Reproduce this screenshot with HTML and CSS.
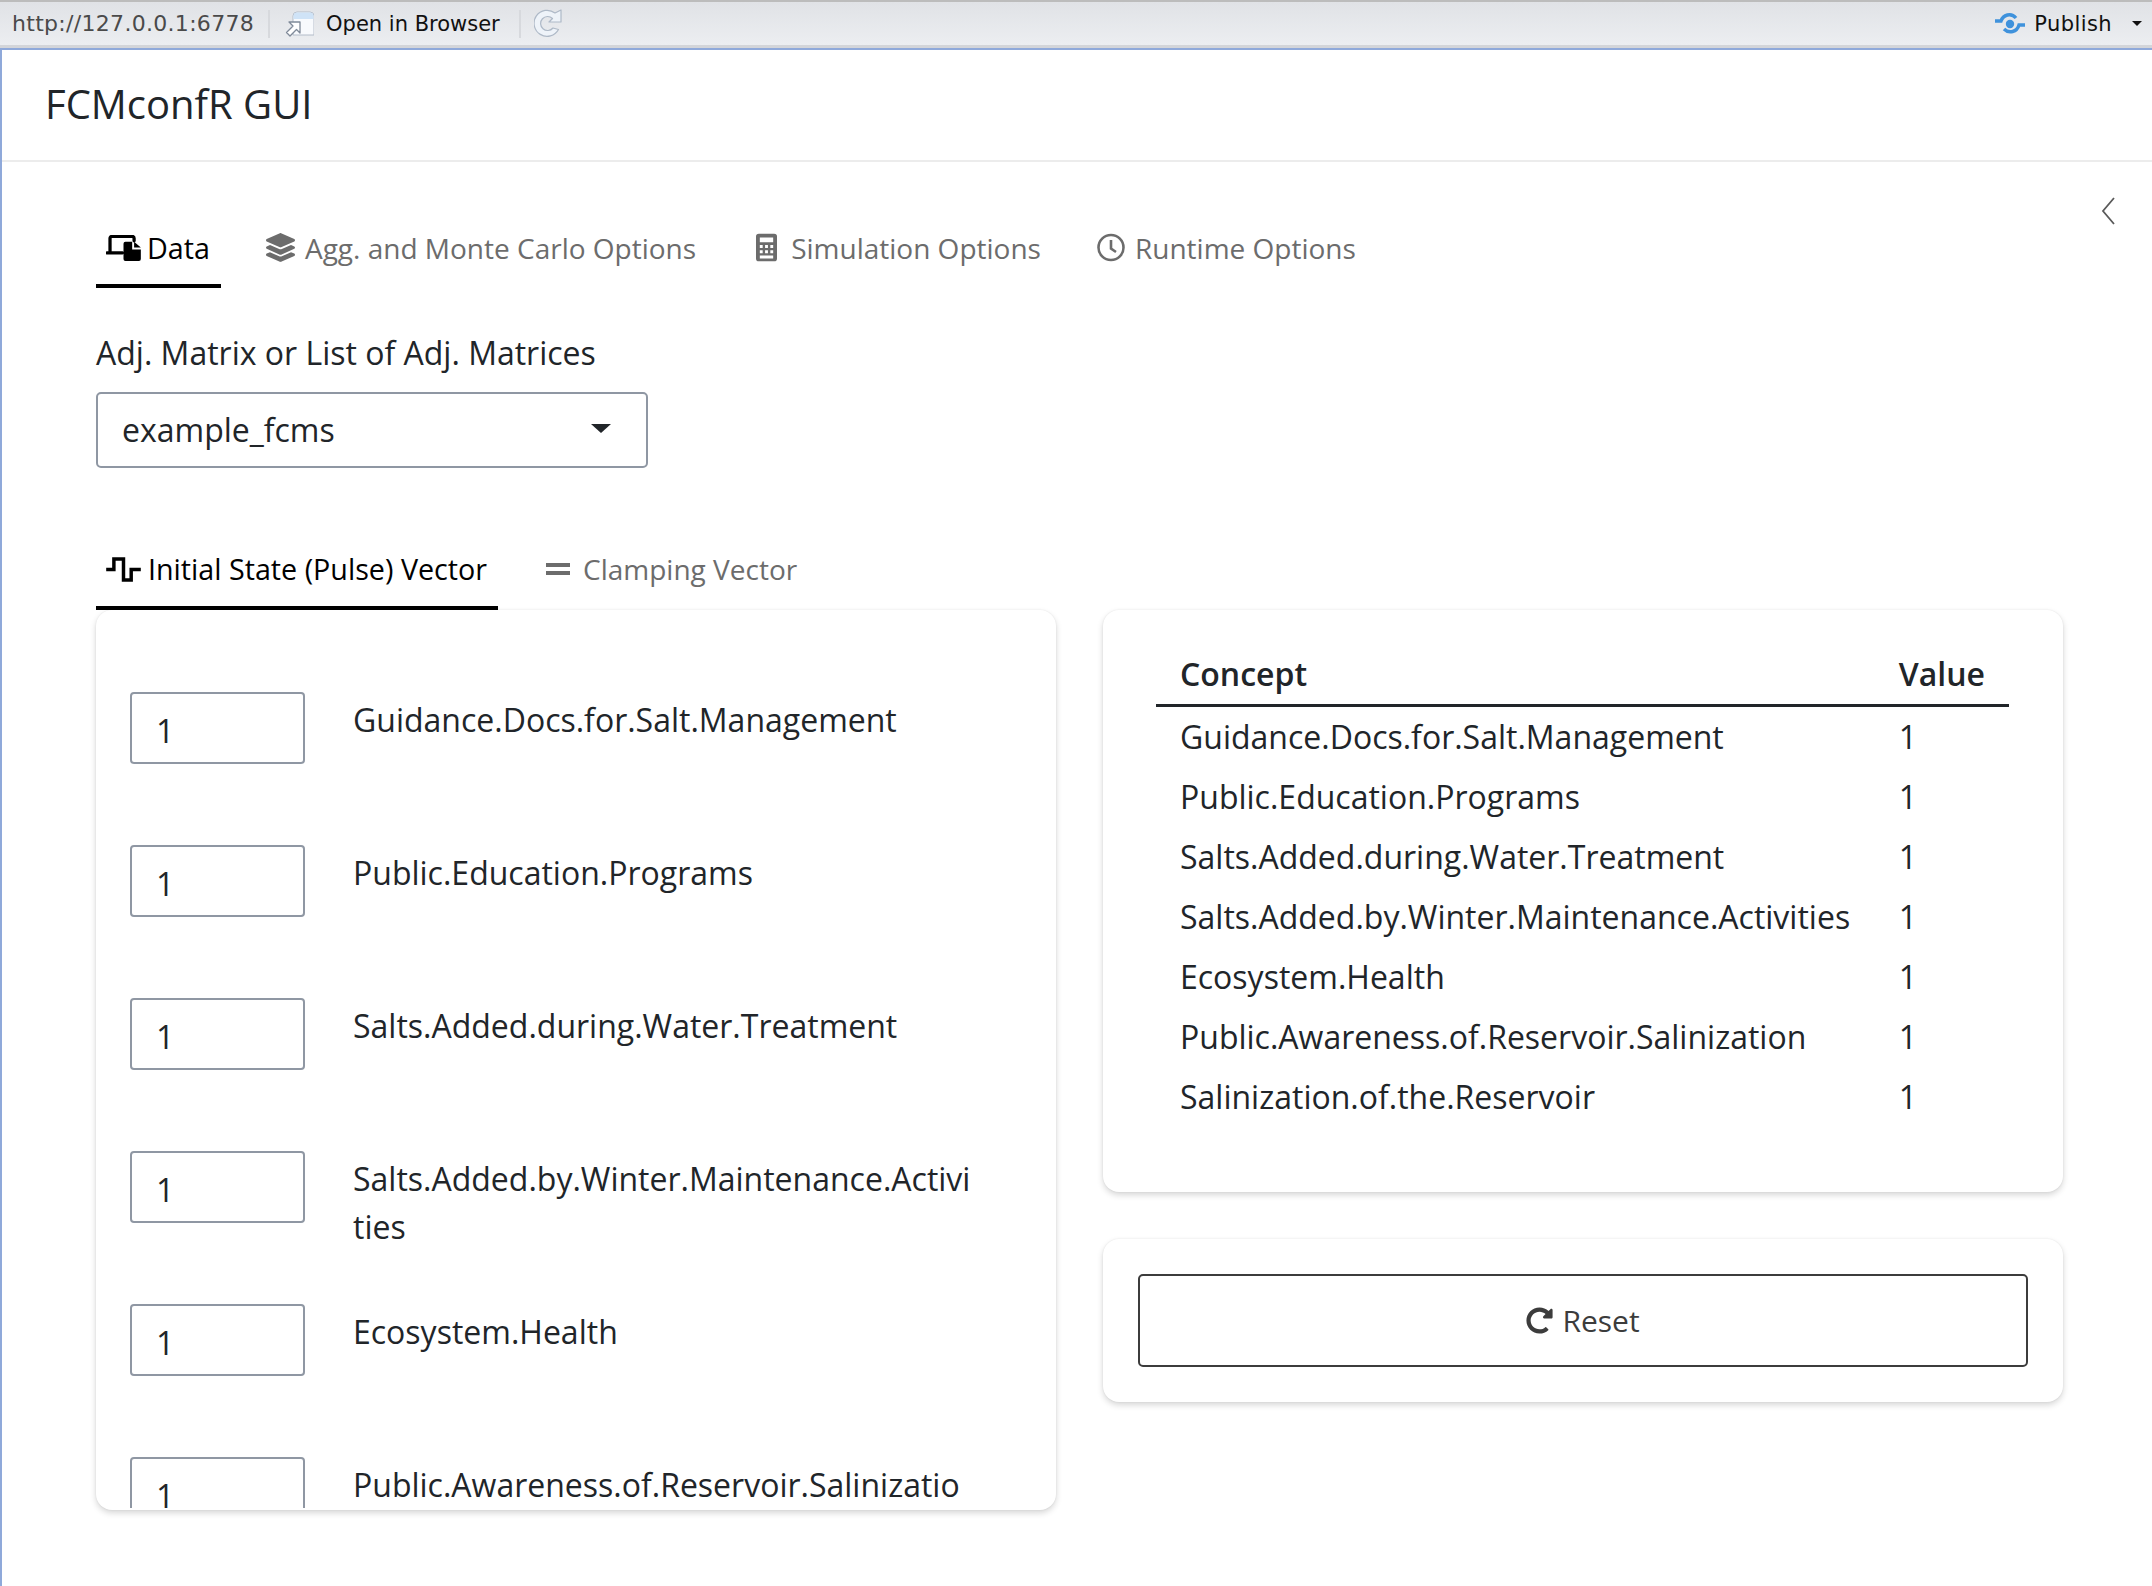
FILE: index.html
```html
<!DOCTYPE html>
<html lang="en">
<head>
    <meta charset="UTF-8">
    <title>FCMconfR GUI</title>
    <link rel="stylesheet" href="styles.css">
</head>
<body>
    <!-- viewer toolbar -->
    <div class="toolbar">
      <span class="toolbarUrl">http://127.0.0.1:6778</span>
      <span class="toolbarSep"></span>
      <svg class="toolbarOpenIcon" viewBox="0 0 30 26">
        <path d="M9 24V5a4 4 0 0 1 4-4h13a4 4 0 0 1 4 4v19z" fill="#f8fafd" stroke="#b4bdc9"/>
        <path d="M9.500 7V5a3.500 3.500 0 0 1 3.500-3.500h13A3.500 3.500 0 0 1 29.500 5v3H9.500z" fill="#cfe3f7"/>
        <path d="M6 6h11v11l-3.500-3.500L7 20l-3.500-3.500L10 10z" fill="#fff" stroke="#7f8a99" stroke-width="1.300" stroke-linejoin="round" transform="translate(-1 5)"/>
      </svg>
      <span class="toolbarLabel">Open in Browser</span>
      <span class="toolbarSep toolbarSepWide"></span>
      <svg class="toolbarReload" viewBox="0 0 28 30">
        <path d="M24.500 20.500A13 13 0 1 1 21 4l6-3v12H15l3.500-3.500a7 7 0 1 0 .5 9.500z" fill="#eef3f9" stroke="#aeb9c7" stroke-width="1.200" stroke-linejoin="round"/>
      </svg>
      <span class="toolbarSpacer"></span>
      <svg class="publishIcon" viewBox="0 0 32 24">
        <circle cx="16" cy="12" r="4.200" fill="#3f92dc"/>
        <path d="M1 9h6c2-6 10-9 15-3M31 13h-6c-2 7-10 9-15 4" fill="none" stroke="#3f92dc" stroke-width="3.400"/>
      </svg>
      <span class="toolbarLabel publishLabel">Publish</span>
      <span class="publishCaret"></span>
    </div>

    <div class="appFrame">
      <header class="appHeader">FCMconfR GUI</header>

      <main class="appBody">
        <svg class="sidebarToggle" viewBox="0 0 14 28">
          <path d="M13 1L2 14l11 13" fill="none" stroke="#5a5a5a" stroke-width="1.800"/>
        </svg>

        <nav class="tabs mainTabs">
          <a class="tab active">
            <svg class="tabIcon iconData" viewBox="0 0 36 27">
              <path d="M4 18V3.500a2 2 0 0 1 2-2h21a2 2 0 0 1 2 2V6M1 18.500h16" fill="none" stroke="currentColor" stroke-width="3.400" stroke-linecap="round"/>
              <path d="M20 7h7v8h9v10a2 2 0 0 1-2 2H20a2 2 0 0 1-2-2V9a2 2 0 0 1 2-2zM29 7l7 6h-7z" fill="currentColor"/>
            </svg>
            Data
          </a>
          <a class="tab">
            <svg class="tabIcon iconLayers" viewBox="0 0 512 512">
              <path fill="currentColor" d="M12.410 148.020l232.940 105.670c6.800 3.090 14.490 3.090 21.290 0l232.940-105.670c16.550-7.510 16.550-32.520 0-40.030L266.650 2.310a25.607 25.607 0 0 0-21.290 0L12.410 107.980c-16.550 7.510-16.550 32.530 0 40.040zm487.180 88.280l-58.090-26.330-161.640 73.270c-7.560 3.430-15.590 5.170-23.860 5.170s-16.290-1.740-23.860-5.170L70.510 209.970l-58.100 26.330c-16.550 7.500-16.550 32.500 0 40l232.940 105.590c6.800 3.080 14.490 3.080 21.290 0L499.590 276.300c16.550-7.500 16.550-32.500 0-40zm0 127.800l-57.870-26.230-161.860 73.370c-7.560 3.430-15.590 5.170-23.860 5.170s-16.290-1.740-23.860-5.170L70.290 337.870 12.410 364.100c-16.550 7.500-16.550 32.500 0 40l232.940 105.590c6.800 3.080 14.490 3.080 21.290 0L499.590 404.100c16.550-7.500 16.550-32.500 0-40z"/>
            </svg>
            Agg. and Monte Carlo Options
          </a>
          <a class="tab">
            <svg class="tabIcon iconCalc" viewBox="0 0 22 29">
              <path fill="currentColor" fill-rule="evenodd" d="M3 0h16a3 3 0 0 1 3 3v23a3 3 0 0 1-3 3H3a3 3 0 0 1-3-3V3a3 3 0 0 1 3-3zM4 4v5h14V4zM4 12v3h3v-3zM9.500 12v3h3v-3zM15 12v3h3v-3zM4 17.500v3h3v-3zM9.500 17.500v3h3v-3zM15 17.500v3h3v-3zM4 23v3h14v-3z"/>
            </svg>
            Simulation Options
          </a>
          <a class="tab">
            <svg class="tabIcon iconClock" viewBox="0 0 28 28">
              <circle cx="14" cy="14" r="12.500" fill="none" stroke="currentColor" stroke-width="2.600"/>
              <path d="M14 6.500V15l5 3.500" fill="none" stroke="currentColor" stroke-width="2.600"/>
            </svg>
            Runtime Options
          </a>
        </nav>

        <div class="fieldLabel">Adj. Matrix or List of Adj. Matrices</div>
        <div class="selectBox">
          <span>example_fcms</span>
          <span class="selectCaret"></span>
        </div>

        <nav class="tabs subTabs">
          <a class="tab active">
            <svg class="tabIcon iconPulse" viewBox="0 0 36 26">
              <path d="M0 13h8V2h10v22h8V13h10" fill="none" stroke="currentColor" stroke-width="3.600"/>
            </svg>
            Initial State (Pulse) Vector
          </a>
          <a class="tab">
            <svg class="tabIcon iconEquals" viewBox="0 0 24 26">
              <path d="M0 7h24v4H0zM0 15h24v4H0z" fill="currentColor"/>
            </svg>
            Clamping Vector
          </a>
        </nav>

        <div class="cardColumns">
          <section class="card inputCard">
            <div class="inputScroll">
              <div class="inputRow"><div class="numberBox">1</div><div class="inputName">Guidance.Docs.for.Salt.Management</div></div>
              <div class="inputRow"><div class="numberBox">1</div><div class="inputName">Public.Education.Programs</div></div>
              <div class="inputRow"><div class="numberBox">1</div><div class="inputName">Salts.Added.during.Water.Treatment</div></div>
              <div class="inputRow"><div class="numberBox">1</div><div class="inputName">Salts.Added.by.Winter.Maintenance.Activities</div></div>
              <div class="inputRow"><div class="numberBox">1</div><div class="inputName">Ecosystem.Health</div></div>
              <div class="inputRow"><div class="numberBox">1</div><div class="inputName">Public.Awareness.of.Reservoir.Salinization</div></div>
            </div>
          </section>

          <div class="rightColumn">
            <section class="card tableCard">
              <table class="valueTable">
                <thead>
                  <tr><th>Concept</th><th>Value</th></tr>
                </thead>
                <tbody>
                  <tr><td>Guidance.Docs.for.Salt.Management</td><td>1</td></tr>
                  <tr><td>Public.Education.Programs</td><td>1</td></tr>
                  <tr><td>Salts.Added.during.Water.Treatment</td><td>1</td></tr>
                  <tr><td>Salts.Added.by.Winter.Maintenance.Activities</td><td>1</td></tr>
                  <tr><td>Ecosystem.Health</td><td>1</td></tr>
                  <tr><td>Public.Awareness.of.Reservoir.Salinization</td><td>1</td></tr>
                  <tr><td>Salinization.of.the.Reservoir</td><td>1</td></tr>
                </tbody>
              </table>
            </section>
            <section class="card buttonCard">
              <button class="resetButton">
                <svg class="resetIcon" viewBox="0 0 512 512">
                  <path fill="currentColor" d="M256.455 8c66.269.119 126.437 26.233 170.859 68.685l35.715-35.715C478.149 25.851 504 36.559 504 57.941V192c0 13.255-10.745 24-24 24H345.941c-21.382 0-32.090-25.851-16.971-40.971l41.750-41.750c-30.864-28.899-70.801-44.907-113.230-45.273-92.398-.798-170.283 73.977-169.484 169.442C88.764 348.009 162.184 424 256 424c41.127 0 79.997-14.678 110.629-41.556 4.743-4.161 11.906-3.908 16.368.553l39.662 39.662c4.872 4.872 4.631 12.815-.482 17.433C378.202 479.813 319.926 504 256 504 119.034 504 8.001 392.967 8 256.002 7.999 119.193 119.646 7.755 256.455 8z"/>
                </svg>
                Reset
              </button>
            </section>
          </div>
        </div>
      </main>
    </div>
</body>
</html>
```

FILE: styles.css
```css
:root {
    --text-color: #212529;
    --muted-tab-color: #6c6c6c;
    --input-border: #8f97a3;
    --frame-blue: #8fa9da;
}
* {
    box-sizing: border-box;
}
html, body {
    height: 100%;
}
body {
    margin: 0;
    font: 32px/48px "Open Sans", sans-serif;
    color: var(--text-color);
    background-color: #fff;
    overflow: hidden;
}

/* viewer toolbar */
.toolbar {
    display: flex;
    align-items: center;
    height: 48px;
    padding: 0 10px 0 12px;
    border-top: 2px solid #bcbcbc;
    border-bottom: 3px solid #d3d5d9;
    background: linear-gradient(#e0e2e6, #eceef1);
    font: 22px/26px "DejaVu Sans", sans-serif;
}
.toolbarUrl {
    color: #4a4a4a;
    font-size: 22px;
    letter-spacing: 0.3px;
}
.toolbarSep {
    width: 2px;
    height: 28px;
    margin: 0 14px 0 14px;
    background: #d7d9dd;
}
.toolbarSepWide {
    margin: 0 13px 0 19px;
}
.toolbarOpenIcon {
    width: 30px;
    height: 26px;
    margin-right: 12px;
}
.toolbarLabel {
    color: #111;
    font-size: 21px;
}
.publishLabel {
    letter-spacing: 0.4px;
}
.toolbarReload {
    width: 28px;
    height: 30px;
}
.toolbarSpacer {
    flex: 1;
}
.publishIcon {
    width: 32px;
    height: 24px;
    margin-right: 8px;
}
.publishCaret {
    margin-left: 20px;
    border-top: 5px solid #111;
    border-left: 5px solid transparent;
    border-right: 5px solid transparent;
}

/* app */
.appFrame {
    height: calc(100% - 48px);
    border-top: 2px solid var(--frame-blue);
    border-left: 2px solid var(--frame-blue);
}
.appHeader {
    height: 112px;
    padding: 30px 0 0 43px;
    border-bottom: 2px solid #ececec;
    font-size: 40px;
    line-height: 48px;
}
.appBody {
    position: relative;
    padding: 0 88px 0 94px;
}
.sidebarToggle {
    position: absolute;
    top: 35px;
    right: 37px;
    width: 14px;
    height: 28px;
}

/* tabs */
.tabs {
    display: flex;
}
.mainTabs {
    padding-top: 45px;
}
.subTabs {
    margin-top: 64px;
}
.tab {
    display: flex;
    align-items: center;
    height: 81px;
    padding: 4px 11px 0 10px;
    border-bottom: 4px solid transparent;
    font-size: 28px;
    color: var(--muted-tab-color);
    margin-right: 35px;
    white-space: nowrap;
}
.subTabs .tab {
    height: 78px;
    padding-top: 0;
    margin-right: 38px;
}
.tab.active {
    color: #000;
    border-bottom-color: #000;
    font-size: 28.7px;
    font-weight: 500;
}
.tabIcon {
    flex: none;
    height: 29px;
    margin-right: 10px;
}
.iconData {
    width: 35px;
    height: 26px;
    margin-right: 6px;
}
.iconLayers {
    width: 29px;
}
.iconCalc {
    width: 21px;
    margin-left: 4px;
    margin-right: 14px;
}
.iconClock {
    width: 28px;
    margin-right: 10px;
}
.iconPulse {
    width: 35px;
    height: 25px;
    margin-right: 7px;
}
.iconEquals {
    width: 24px;
    height: 26px;
    margin-right: 13px;
}

/* select */
.fieldLabel {
    margin-top: 41px;
    margin-bottom: 15px;
    font-size: 32px;
}
.selectBox {
    display: flex;
    justify-content: space-between;
    align-items: center;
    width: 552px;
    height: 76px;
    padding: 0 35px 0 24px;
    border: 2px solid var(--input-border);
    border-radius: 5px;
}
.selectCaret {
    margin-top: -4px;
    border-top: 9px solid #212529;
    border-left: 10px solid transparent;
    border-right: 10px solid transparent;
}

/* cards */
.cardColumns {
    display: flex;
    gap: 47px;
    align-items: flex-start;
}
.card {
    width: 960px;
    border-radius: 16px;
    background: #fff;
    box-shadow: 0 3px 6px rgba(0, 0, 0, 0.16), 0 0 2px rgba(0, 0, 0, 0.08);
}
.inputCard {
    height: 900px;
}
.inputScroll {
    height: 898px;
    padding: 82px 34px 0;
    overflow: hidden;
}
.inputRow {
    display: flex;
    gap: 48px;
    height: 153px;
}
.numberBox {
    flex: none;
    width: 175px;
    height: 72px;
    padding: 13px 0 0 24px;
    border: 2px solid var(--input-border);
    border-radius: 4px;
}
.inputName {
    width: 621px;
    padding-top: 4px;
    word-break: break-all;
}
.rightColumn {
    display: flex;
    flex-direction: column;
    gap: 47px;
}
.tableCard {
    height: 582px;
    padding: 40px 54px 0 53px;
}
.valueTable {
    width: 100%;
    border-collapse: collapse;
}
.valueTable th {
    height: 55px;
    padding: 0 24px 6px;
    border-bottom: 3px solid #212529;
    text-align: left;
    font-weight: 600;
}
.valueTable td {
    height: 60px;
    padding: 2px 24px 0;
    line-height: 48px;
}
.valueTable th:last-child,
.valueTable td:last-child {
    width: 111px;
}
.buttonCard {
    height: 163px;
    padding: 35px;
}
.resetButton {
    display: flex;
    align-items: center;
    justify-content: center;
    gap: 9px;
    width: 100%;
    height: 93px;
    border: 2px solid #3c3c3c;
    border-radius: 5px;
    background: #fff;
    color: #3c3c3c;
    font: 30px/48px "Open Sans", sans-serif;
}
.resetIcon {
    width: 27px;
    height: 27px;
}
```
